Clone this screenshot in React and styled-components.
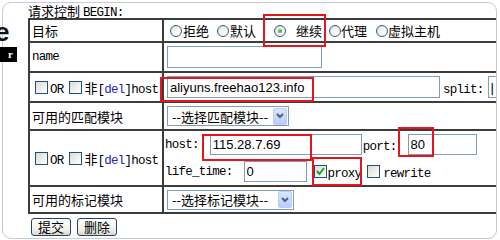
import React from 'react';
import styled, { createGlobalStyle } from 'styled-components';

const CJK = `"Noto Sans CJK SC", "Liberation Sans", sans-serif`;
const MONO = `"Liberation Mono", "Noto Sans CJK SC", monospace`;
const SANS = `"Liberation Sans", "Noto Sans CJK SC", sans-serif`;

const GlobalStyle = createGlobalStyle`
  html, body { margin: 0; padding: 0; background: #fff; }
  body { font-family: ${SANS}; color: #000; }
`;

//============== page + frame =================
const Page = styled.div`
  position: relative;
  width: 500px;
  height: 240px;
  overflow: hidden;
  background: #fff;
`;

const Frame = styled.div`
  box-sizing: border-box;
  margin: 2px 0 0 2px;
  width: 495px;
  height: 237px;
  border: 1px solid #c8c8da;
  border-radius: 9px;
  overflow: hidden;
  padding-left: 25px;
`;

// bits of the page behind the popup
const BigLetter = styled.span`
  position: absolute;
  left: -5px;
  top: 19px;
  font: bold 26px/26px ${SANS};
  color: #111;
`;

const BlackTag = styled.span`
  position: absolute;
  left: 0;
  top: 47px;
  width: 17px;
  height: 15px;
  background: #000;
  color: #fff;
  font: bold 11px/15px "Liberation Serif", serif;
  text-indent: 8px;
`;

const Title = styled.div`
  height: 15px;
  font: 13px/15px ${CJK};
  white-space: nowrap;
`;

const Mono = styled.span`
  font-family: ${MONO};
  font-size: 12.5px;
  letter-spacing: -0.75px;
  color: ${p => p.$blue ? '#2323c8' : 'inherit'};
`;

//============== table =================
const Table = styled.div`
  display: grid;
  width: 620px;
  grid-template-columns: 132px 1fr;
  grid-template-rows: 21px 28px 28px 26px 54px 25px;
  gap: 2px;
  padding: 2px;
  background: #3c3c3c;
`;

const Cell = styled.div`
  display: flex;
  flex-direction: ${p => p.$column ? 'column' : 'row'};
  align-items: ${p => p.$column ? 'stretch' : 'center'};
  justify-content: ${p => p.$column ? 'center' : 'flex-start'};
  background: #fff;
  padding-left: ${p => p.$pad ?? 2}px;
  white-space: nowrap;
  overflow: hidden;
  font: 13px ${CJK};
`;

const Line = styled.div`
  display: flex;
  align-items: center;
  height: 27px;
`;

const Text = styled.span`
  margin-left: ${p => p.$gap || 0}px;
`;

//============== form controls (xp look) =================
const Radio = styled.span`
  box-sizing: border-box;
  flex: none;
  width: 12px;
  height: 12px;
  border-radius: 50%;
  border: 1px solid #2f5f8e;
  margin-left: ${p => p.$lead || 0}px;
  background: radial-gradient(circle at 70% 70%, #ffffff 0%, #f3f3ef 45%, #d8d8d0 100%);
  display: flex;
  align-items: center;
  justify-content: center;

  &::after {
    content: '';
    display: ${p => p.$checked ? 'block' : 'none'};
    width: 4px;
    height: 4px;
    border-radius: 50%;
    background: radial-gradient(circle at 40% 40%, #6fd36f, #1c9a1c);
  }
`;

const Box = styled.span`
  box-sizing: border-box;
  flex: none;
  width: 13px;
  height: 13px;
  border: 1px solid #1c5180;
  margin-left: ${p => p.$lead || 0}px;
  background: linear-gradient(135deg, #dcdcd7 0%, #eeeee8 50%, #ffffff 100%);
  display: flex;
  align-items: center;
  justify-content: center;
`;

const Input = styled.input`
  box-sizing: border-box;
  flex: none;
  width: ${p => p.$w}px;
  height: ${p => p.$h || 21}px;
  margin: 0 0 0 ${p => p.$lead || 0}px;
  padding: 0 0 0 2px;
  border: 1px solid #7f9db9;
  background: #fff;
  font: 13px ${SANS};
  color: #000;
  outline: none;
`;

const Select = styled.div`
  box-sizing: border-box;
  flex: none;
  width: ${p => p.$w}px;
  height: 20px;
  margin-left: 3px;
  padding: 1px 1px 1px 4px;
  border: 1px solid #7f9db9;
  display: flex;
  align-items: center;
  justify-content: space-between;
  font: 13px ${CJK};
  background: #fff;
`;

const Drop = styled.span`
  box-sizing: border-box;
  width: 14px;
  height: 17px;
  border: 1px solid #b8ccf6;
  border-radius: 2px;
  background: linear-gradient(#d9e5fd, #b9cdf7);
  display: flex;
  align-items: center;
  justify-content: center;
`;

//============== buttons + marks =================
const Actions = styled.div`
  display: flex;
  gap: 6px;
  margin-top: 4px;
  padding-left: 3px;
`;

const Button = styled.div`
  box-sizing: border-box;
  width: 40px;
  height: 18px;
  border: 1px solid #1f4470;
  border-radius: 3px;
  background: linear-gradient(#ffffff, #f1efe6 70%, #d9d4c6);
  font: 13px/16px ${CJK};
  text-align: center;
`;

const Mark = styled.div`
  position: absolute;
  box-sizing: border-box;
  left: ${p => p.$x}px;
  top: ${p => p.$y}px;
  width: ${p => p.$w}px;
  height: ${p => p.$h}px;
  border: 2px solid #e8141c;
  pointer-events: none;
`;

function Chevron() {
  return (
    <svg width="8" height="6" viewBox="0 0 8 6">
      <path d="M1 1 L4 4 L7 1" fill="none" stroke="#4d6185" strokeWidth="2" />
    </svg>
  );
}

function Tick() {
  return (
    <svg width="11" height="11" viewBox="0 0 11 11">
      <path d="M2 5 L4.5 8 L9 2" fill="none" stroke="#21a121" strokeWidth="2" />
    </svg>
  );
}

function OrDel() {
  return (
    <>
      <Box $lead={3} />
      <Text $gap={2}><Mono>OR</Mono></Text>
      <Box $lead={5} />
      <Text $gap={3}>非<Mono>[<Mono $blue>del</Mono>]host</Mono></Text>
    </>
  );
}

export default function App() {
  return (
    <Page>
      <GlobalStyle />
      <Frame>
        <Title>请求控制 <Mono>BEGIN:</Mono></Title>
        <Table>
          <Cell>目标</Cell>
          <Cell $pad={0}>
            <Radio $lead={6} /><Text $gap={1}>拒绝</Text>
            <Radio $lead={8} /><Text $gap={1}>默认</Text>
            <Radio $lead={18} $checked /><Text $gap={10}>继续</Text>
            <Radio $lead={7} /><Text>代理</Text>
            <Radio $lead={9} /><Text>虚拟主机</Text>
          </Cell>

          <Cell><Mono>name</Mono></Cell>
          <Cell $pad={0}>
            <Input $lead={3} $w={155} $h={22} defaultValue="" />
          </Cell>

          <Cell><OrDel /></Cell>
          <Cell $pad={0}>
            <Input $lead={3} $w={273} $h={22} defaultValue="aliyuns.freehao123.info" />
            <Text $gap={3}><Mono>split:</Mono></Text>
            <Input $lead={4} $w={120} $h={22} defaultValue="|" />
          </Cell>

          <Cell>可用的匹配模块</Cell>
          <Cell $pad={0}>
            <Select $w={122}>--选择匹配模块--<Drop><Chevron /></Drop></Select>
          </Cell>

          <Cell><OrDel /></Cell>
          <Cell $pad={1} $column>
            <Line>
              <Mono>host:</Mono>
              <Input $lead={11} $w={152} defaultValue="115.28.7.69" />
              <Text $gap={1}><Mono>port:</Mono></Text>
              <Input $lead={11} $w={69} defaultValue="80" />
            </Line>
            <Line>
              <Mono>life_time:</Mono>
              <Input $lead={11} $w={63} defaultValue="0" />
              <Box $lead={7}><Tick /></Box>
              <Text $gap={1}><Mono>proxy</Mono></Text>
              <Box $lead={6} />
              <Text $gap={3}><Mono>rewrite</Mono></Text>
            </Line>
          </Cell>

          <Cell>可用的标记模块</Cell>
          <Cell $pad={0}>
            <Select $w={127}>--选择标记模块--<Drop><Chevron /></Drop></Select>
          </Cell>
        </Table>
        <Actions>
          <Button>提交</Button>
          <Button>删除</Button>
        </Actions>
      </Frame>

      <BigLetter>e</BigLetter>
      <BlackTag>r</BlackTag>

      <Mark $x={263} $y={14} $w={63} $h={33} />
      <Mark $x={160} $y={77} $w={154} $h={25} />
      <Mark $x={202} $y={134} $w={110} $h={27} />
      <Mark $x={398} $y={127} $w={36} $h={30} />
      <Mark $x={312} $y={157} $w={50} $h={29} />
    </Page>
  );
}
